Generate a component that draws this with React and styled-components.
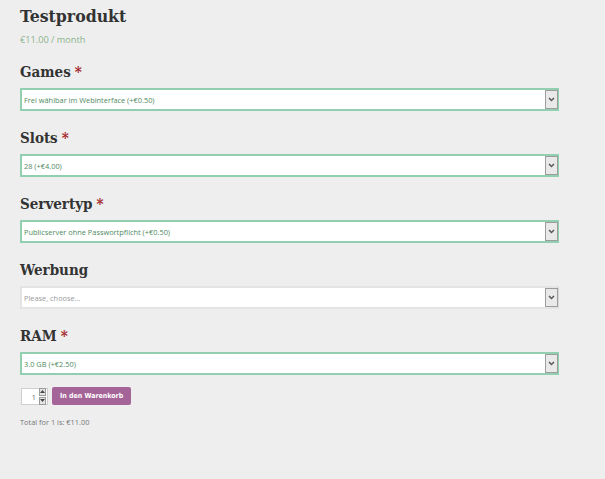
import React, { useState } from 'react';
import styled, { createGlobalStyle } from 'styled-components';

const GlobalStyle = createGlobalStyle`
  html, body {
    margin: 0;
    background: #eeeeee;
  }
`;

const StyledPage = styled.div`
  padding: 4px 46px 40px 20px;
  width: 539px;
  font-family: 'Open Sans', 'Liberation Sans', sans-serif;
`;

const StyledTitle = styled.h1`
  margin: 0;
  font-family: 'DejaVu Serif Condensed', 'DejaVu Serif', serif;
  font-size: 17.5px;
  font-weight: 700;
  line-height: 24px;
  color: #333333;
`;

const StyledPrice = styled.p`
  margin: 5px 0 0;
  font-size: 9.2px;
  line-height: 14px;
  color: #8db48d;
`;

const StyledField = styled.div`
  margin-top: ${(props) => (props.first ? '15px' : '17px')};
`;

const StyledLabel = styled.label`
  display: block;
  font-family: 'DejaVu Serif Condensed', 'DejaVu Serif', serif;
  font-size: 15px;
  font-weight: 700;
  line-height: 20px;
  color: #333333;
  margin-bottom: 6px;
`;

const StyledRequired = styled.abbr`
  color: #a5262a;
  text-decoration: none;
  margin-left: 4px;
`;

const StyledSelect = styled.div`
  display: flex;
  align-items: stretch;
  height: 23px;
  box-sizing: border-box;
  background: #ffffff;
  border: 2px solid ${(props) => (props.filled ? '#92cfb0' : '#e4e4e4')};
  border-right: 1px solid ${(props) => (props.filled ? '#92cfb0' : '#d8d8d8')};
`;

const StyledValue = styled.span`
  flex: 1;
  display: flex;
  align-items: center;
  padding-left: 2px;
  font-size: 7.4px;
  color: ${(props) => (props.filled ? '#4f8a62' : '#9a9a9a')};
`;

const StyledArrow = styled.span`
  width: 11px;
  display: flex;
  align-items: center;
  justify-content: center;
  background: #e9e9e9;
  border: 1px solid #9c9c9c;
  color: #555555;
`;

const StyledActions = styled.div`
  display: flex;
  align-items: center;
  gap: 4px;
  margin-top: 12px;
  padding-left: 1px;
`;

const StyledQty = styled.div`
  display: flex;
  align-items: center;
  justify-content: space-between;
  width: 27px;
  height: 17px;
  box-sizing: border-box;
  background: #ffffff;
  border: 1px solid #cfcfcf;
  padding: 0 1px 0 0;
  font-size: 8px;
  color: #777777;
`;

const StyledQtyNumber = styled.span`
  flex: 1;
  text-align: right;
  padding-right: 3px;
`;

const StyledSpinner = styled.span`
  display: flex;
  flex-direction: column;
  gap: 1px;
  width: 7px;
`;

const StyledSpin = styled.span`
  height: 6px;
  display: flex;
  align-items: center;
  justify-content: center;
  background: #e4e4e4;
  border: 1px solid #9a9a9a;
`;

const StyledButton = styled.button`
  height: 18px;
  padding: 0 8px;
  border: none;
  border-radius: 2px;
  background: #a46497;
  color: #ffffff;
  font-family: 'DejaVu Sans Condensed', 'DejaVu Sans', sans-serif;
  font-size: 7px;
  font-weight: 700;
  cursor: pointer;
`;

const StyledTotal = styled.p`
  margin: 12px 0 0;
  font-size: 7.4px;
  color: #777777;
`;

const fields = [
  { label: 'Games', required: true, value: 'Frei wählbar im Webinterface (+€0.50)' },
  { label: 'Slots', required: true, value: '28 (+€4.00)' },
  { label: 'Servertyp', required: true, value: 'Publicserver ohne Passwortpflicht (+€0.50)' },
  { label: 'Werbung', required: false, value: '' },
  { label: 'RAM', required: true, value: '3.0 GB (+€2.50)' },
];

const Chevron = () => (
  <svg width="7" height="5" viewBox="0 0 7 5">
    <path d="M1 1 L3.5 3.6 L6 1" fill="none" stroke="#555" strokeWidth="1.4" />
  </svg>
);

const Tri = ({ up }) => (
  <svg width="5" height="3" viewBox="0 0 5 3">
    <path d={up ? 'M0 3 L2.5 0 L5 3 Z' : 'M0 0 L2.5 3 L5 0 Z'} fill="#444" />
  </svg>
);

const App = () => {
  const [qty] = useState(1);

  return (
    <StyledPage>
      <GlobalStyle />
      <StyledTitle>Testprodukt</StyledTitle>
      <StyledPrice>€11.00 / month</StyledPrice>
      {fields.map((field, i) => (
        <StyledField key={field.label} first={i === 0}>
          <StyledLabel>
            {field.label}
            {field.required && <StyledRequired title="required">*</StyledRequired>}
          </StyledLabel>
          <StyledSelect filled={!!field.value}>
            <StyledValue filled={!!field.value}>{field.value || 'Please, choose...'}</StyledValue>
            <StyledArrow>
              <Chevron />
            </StyledArrow>
          </StyledSelect>
        </StyledField>
      ))}
      <StyledActions>
        <StyledQty>
          <StyledQtyNumber>{qty}</StyledQtyNumber>
          <StyledSpinner>
            <StyledSpin>
              <Tri up />
            </StyledSpin>
            <StyledSpin>
              <Tri />
            </StyledSpin>
          </StyledSpinner>
        </StyledQty>
        <StyledButton type="button">In den Warenkorb</StyledButton>
      </StyledActions>
      <StyledTotal>{`Total for ${qty} is: €11.00`}</StyledTotal>
    </StyledPage>
  );
};

export default App;
